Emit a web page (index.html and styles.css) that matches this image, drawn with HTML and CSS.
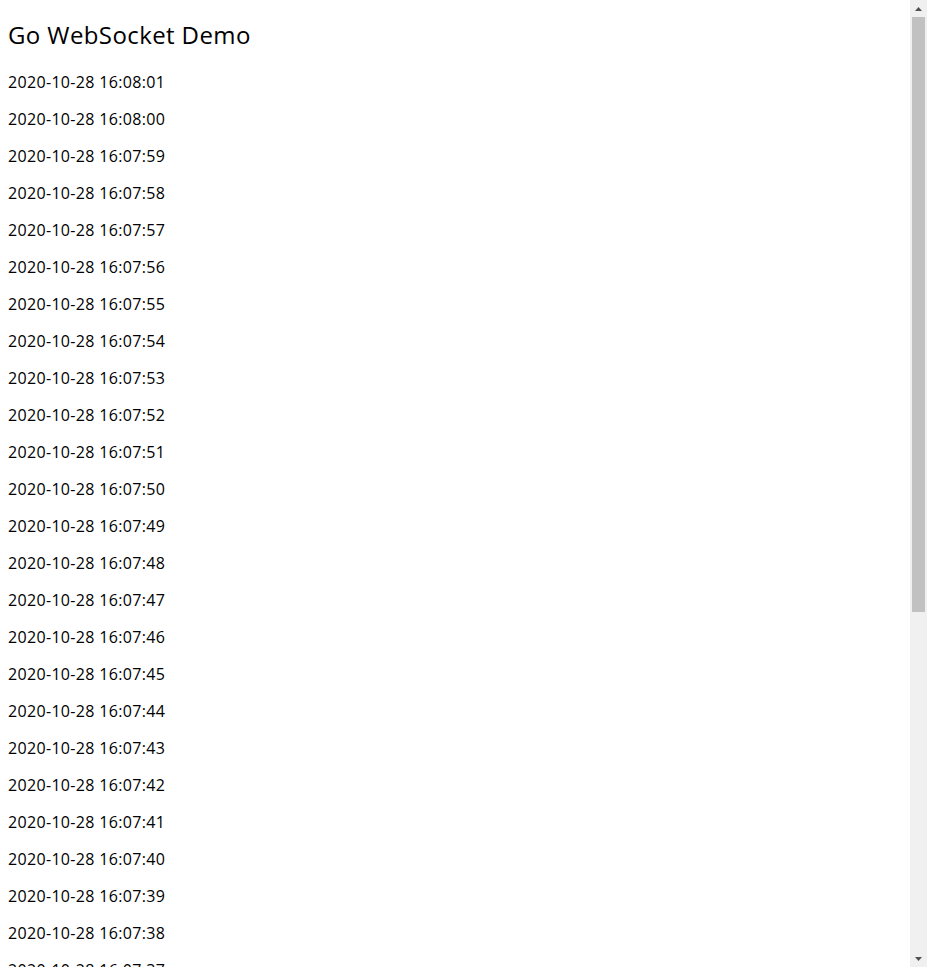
FILE: index.html
```html
<!DOCTYPE html>
<html lang="en">
<head>
<meta charset="utf-8">
<title>Go WebSocket Demo</title>
<link rel="stylesheet" href="styles.css">
</head>
<body>
<h2 class="title">Go WebSocket Demo</h2>
<div class="log">
<p class="entry">2020-10-28 16:08:01</p>
<p class="entry">2020-10-28 16:08:00</p>
<p class="entry">2020-10-28 16:07:59</p>
<p class="entry">2020-10-28 16:07:58</p>
<p class="entry">2020-10-28 16:07:57</p>
<p class="entry">2020-10-28 16:07:56</p>
<p class="entry">2020-10-28 16:07:55</p>
<p class="entry">2020-10-28 16:07:54</p>
<p class="entry">2020-10-28 16:07:53</p>
<p class="entry">2020-10-28 16:07:52</p>
<p class="entry">2020-10-28 16:07:51</p>
<p class="entry">2020-10-28 16:07:50</p>
<p class="entry">2020-10-28 16:07:49</p>
<p class="entry">2020-10-28 16:07:48</p>
<p class="entry">2020-10-28 16:07:47</p>
<p class="entry">2020-10-28 16:07:46</p>
<p class="entry">2020-10-28 16:07:45</p>
<p class="entry">2020-10-28 16:07:44</p>
<p class="entry">2020-10-28 16:07:43</p>
<p class="entry">2020-10-28 16:07:42</p>
<p class="entry">2020-10-28 16:07:41</p>
<p class="entry">2020-10-28 16:07:40</p>
<p class="entry">2020-10-28 16:07:39</p>
<p class="entry">2020-10-28 16:07:38</p>
<p class="entry">2020-10-28 16:07:37</p>
<p class="entry">2020-10-28 16:07:36</p>
<p class="entry">2020-10-28 16:07:35</p>
<p class="entry">2020-10-28 16:07:34</p>
<p class="entry">2020-10-28 16:07:33</p>
<p class="entry">2020-10-28 16:07:32</p>
<p class="entry">2020-10-28 16:07:31</p>
<p class="entry">2020-10-28 16:07:30</p>
<p class="entry">2020-10-28 16:07:29</p>
<p class="entry">2020-10-28 16:07:28</p>
<p class="entry">2020-10-28 16:07:27</p>
<p class="entry">2020-10-28 16:07:26</p>
<p class="entry">2020-10-28 16:07:25</p>
<p class="entry">2020-10-28 16:07:24</p>
<p class="entry">2020-10-28 16:07:23</p>
</div>
<div class="scrollbar" aria-hidden="true">
  <div class="sb-btn">
    <svg width="7" height="4" viewBox="0 0 7 4"><path d="M3.5 0 L7 4 L0 4 Z" fill="#505050"/></svg>
  </div>
  <div class="sb-track">
    <div class="sb-thumb"></div>
  </div>
  <div class="sb-btn">
    <svg width="7" height="4" viewBox="0 0 7 4"><path d="M0 0 L7 0 L3.5 4 Z" fill="#505050"/></svg>
  </div>
</div>
</body>
</html>
```
FILE: styles.css
```css
html {
  overflow: hidden;
  height: 100%;
}
body {
  margin: 0;
  padding: 0 8px;
  display: flow-root;
  font-family: "Open Sans", "Noto Sans", "Noto Sans CJK SC", sans-serif;
  color: #000;
  background: #fff;
}
.title {
  font-size: 24px;
  font-weight: normal;
  line-height: 32px;
  letter-spacing: 0.4px;
  margin: 19px 0 21px;
}
.entry {
  font-size: 16px;
  line-height: 21px;
  letter-spacing: 0.33px;
  margin: 16px 0;
}
.scrollbar {
  position: fixed;
  top: 0;
  right: 0;
  width: 17px;
  height: 100%;
  background: #f0f0f0;
  display: flex;
  flex-direction: column;
}
.sb-btn {
  height: 17px;
  display: flex;
  align-items: center;
  justify-content: center;
  flex: none;
}
.sb-track {
  flex: 1;
  padding: 0 2px;
}
.sb-thumb {
  height: 595px;
  background: #c1c1c1;
}
```
